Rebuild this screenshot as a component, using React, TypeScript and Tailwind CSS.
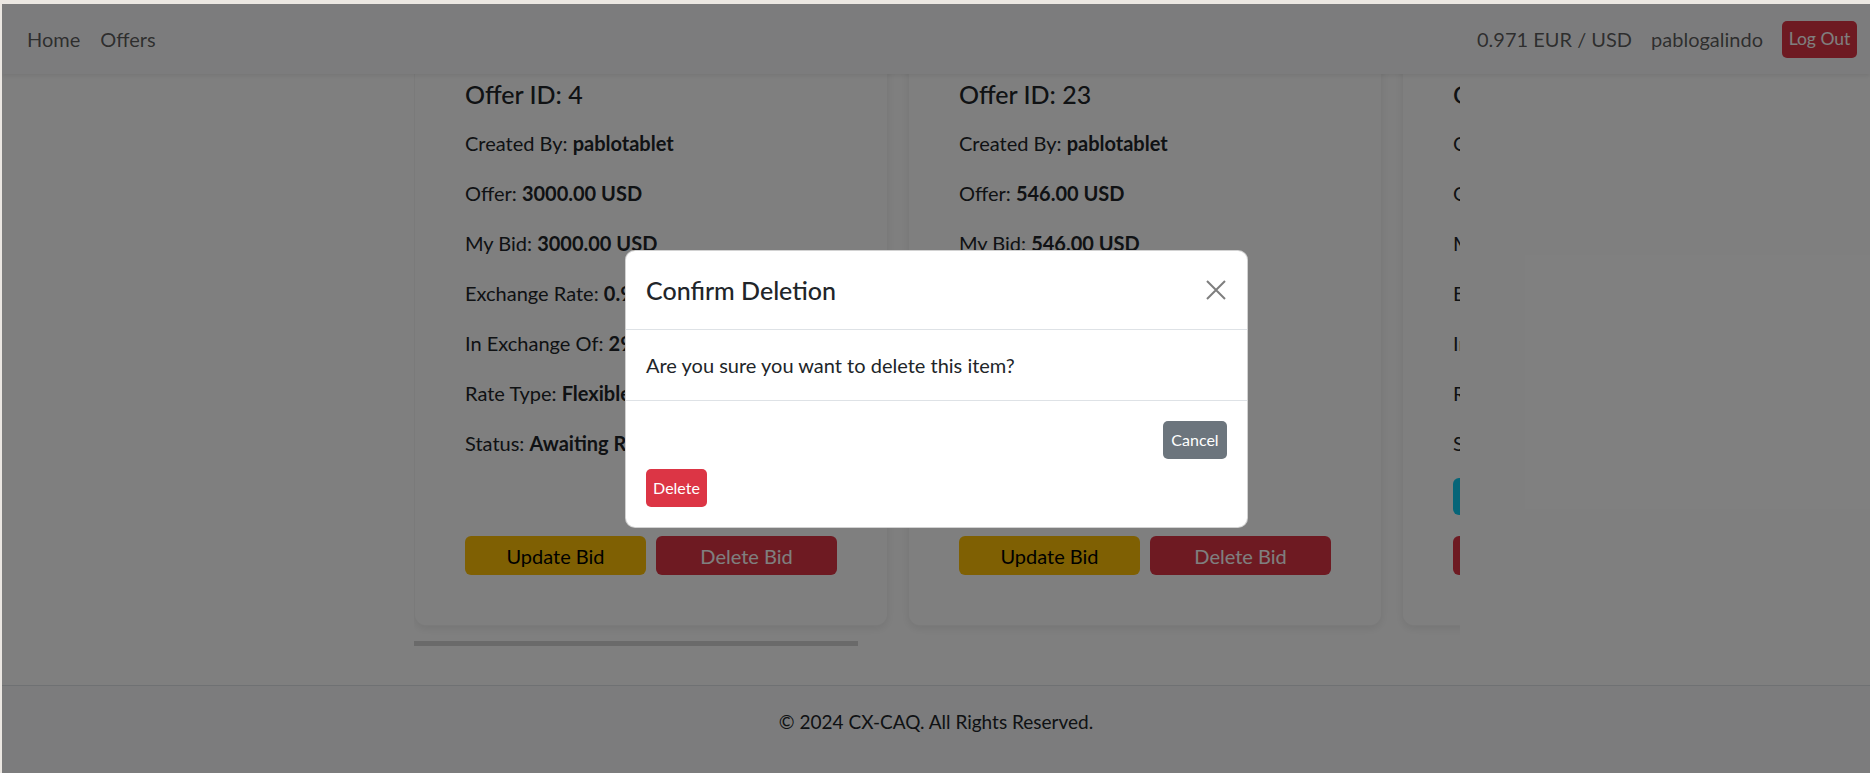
import React from "react";

type Offer = {
  id: number;
  createdBy: string;
  offer: string;
  bid: string;
  rate: string;
  exchange: string;
  rateType: string;
  status: string;
  extra?: boolean;
};

const offers: Offer[] = [
  { id: 4, createdBy: "pablotablet", offer: "3000.00 USD", bid: "3000.00 USD", rate: "0.971", exchange: "2913.00 EUR", rateType: "Flexible", status: "Awaiting Response" },
  { id: 23, createdBy: "pablotablet", offer: "546.00 USD", bid: "546.00 USD", rate: "0.971", exchange: "530.17 EUR", rateType: "Fixed", status: "Awaiting Response" },
  { id: 25, createdBy: "pablotablet", offer: "1200.00 USD", bid: "1150.00 USD", rate: "0.971", exchange: "1116.65 EUR", rateType: "Flexible", status: "Counter Offer", extra: true },
  { id: 31, createdBy: "pablotablet", offer: "800.00 USD", bid: "800.00 USD", rate: "0.971", exchange: "776.80 EUR", rateType: "Fixed", status: "Awaiting Response" },
  { id: 42, createdBy: "pablotablet", offer: "150.00 USD", bid: "150.00 USD", rate: "0.971", exchange: "145.65 EUR", rateType: "Flexible", status: "Awaiting Response" },
];

function Line({ label, value }: { label: string; value: string }) {
  return (
    <p className="mb-[20px] h-[30px] whitespace-nowrap text-[20px] leading-[30px] text-[#212529]">
      {label} <span className="font-bold">{value}</span>
    </p>
  );
}

function Card({ o }: { o: Offer }) {
  return (
    <div className="w-[474px] shrink-0 rounded-[12px] border border-black/[0.04] bg-white px-[50px] pt-[39px] pb-[50px] shadow-[0_3px_8px_rgba(0,0,0,0.08)]">
      <h5 className="mb-[19px] h-[30px] whitespace-nowrap text-[25px] font-medium leading-[30px] text-[#212529]">
        Offer ID: {o.id}
      </h5>
      <Line label="Created By:" value={o.createdBy} />
      <Line label="Offer:" value={o.offer} />
      <Line label="My Bid:" value={o.bid} />
      <Line label="Exchange Rate:" value={o.rate} />
      <Line label="In Exchange Of:" value={o.exchange} />
      <Line label="Rate Type:" value={o.rateType} />
      <Line label="Status:" value={o.status} />
      {o.extra ? (
        <button className="mb-[20px] h-[37px] w-full rounded-[6px] bg-[#0dcaf0] text-[20px] text-black">
          View Counter Offer
        </button>
      ) : (
        <div className="mb-[21px] h-[37px]" />
      )}
      {o.extra ? (
        <button className="mt-[1px] h-[39px] w-full rounded-[6px] bg-[#dc3545] text-[20px] text-white">
          Delete Bid
        </button>
      ) : (
        <div className="grid grid-cols-2 gap-[10px]">
          <button className="h-[39px] rounded-[6px] bg-[#ffc107] text-[20px] text-black">Update Bid</button>
          <button className="h-[39px] rounded-[6px] bg-[#dc3545] text-[20px] text-white">Delete Bid</button>
        </div>
      )}
    </div>
  );
}

export default function App() {
  return (
    <div
      className="h-[773px] w-full overflow-hidden bg-[#ebe7e2] pt-[4px] pl-[2px]"
      style={{ fontFamily: '"Segoe UI", Lato, "Noto Sans", sans-serif' }}
    >
      <div className="relative flex h-[769px] flex-col overflow-hidden bg-white">
        <nav className="relative z-10 flex h-[70px] shrink-0 items-center justify-between bg-[#f8f9fa] pl-[25px] pr-[13px] shadow-[0_2px_4px_rgba(0,0,0,0.08)]">
          <div className="flex items-center gap-[20px] text-[20px] text-black/65">
            <span>Home</span>
            <span>Offers</span>
          </div>
          <div className="flex items-center gap-[19px] text-[20px] text-black/65">
            <span>0.971 EUR / USD</span>
            <span>pablogalindo</span>
            <button className="h-[37px] w-[75px] rounded-[5px] bg-[#dc3545] text-[17.5px] text-white">Log Out</button>
          </div>
        </nav>

        <main className="flex-1 overflow-hidden">
          <div className="-mt-[35px] ml-[412px] w-[1046px] overflow-hidden pb-[10px]">
            <div className="flex gap-[20px]">
              {offers.map((o) => (
                <Card key={o.id} o={o} />
              ))}
            </div>
          </div>
          <div className="ml-[412px] mt-[5px] h-[5px] w-[444px] bg-[#d4d4d4]" />
        </main>

        <footer className="h-[88px] shrink-0 border-t border-[#dee2e6] bg-[#f8f9fa] pt-[21px] text-center text-[19px] leading-[30px] text-[#212529]">
          © 2024 CX-CAQ. All Rights Reserved.
        </footer>

        <div className="absolute inset-0 z-20 flex items-center justify-center bg-black/50 pl-[1px]">
          <div className="w-[623px] overflow-hidden rounded-[10px] border border-black/[0.175] bg-white text-[#212529]">
            <div className="flex h-[79px] items-center justify-between border-b border-[#dee2e6] px-[20px]">
              <h5 className="text-[25px] font-medium leading-[30px]">Confirm Deletion</h5>
              <svg width="20" height="20" viewBox="0 0 20 20" className="mr-[1px] opacity-50">
                <path d="M1 1 L19 19 M19 1 L1 19" stroke="#000" strokeWidth="2" />
              </svg>
            </div>
            <div className="border-b border-[#dee2e6] p-[20px] text-[20px] leading-[30px]">
              Are you sure you want to delete this item?
            </div>
            <div className="flex flex-wrap justify-end p-[15px]">
              <button className="m-[5px] h-[38px] w-[64px] rounded-[5px] bg-[#6c757d] text-[16px] text-white">Cancel</button>
              <div className="w-full">
                <button className="m-[5px] h-[38px] w-[61px] rounded-[5px] bg-[#dc3545] text-[16px] text-white">Delete</button>
              </div>
            </div>
          </div>
        </div>
      </div>
    </div>
  );
}
